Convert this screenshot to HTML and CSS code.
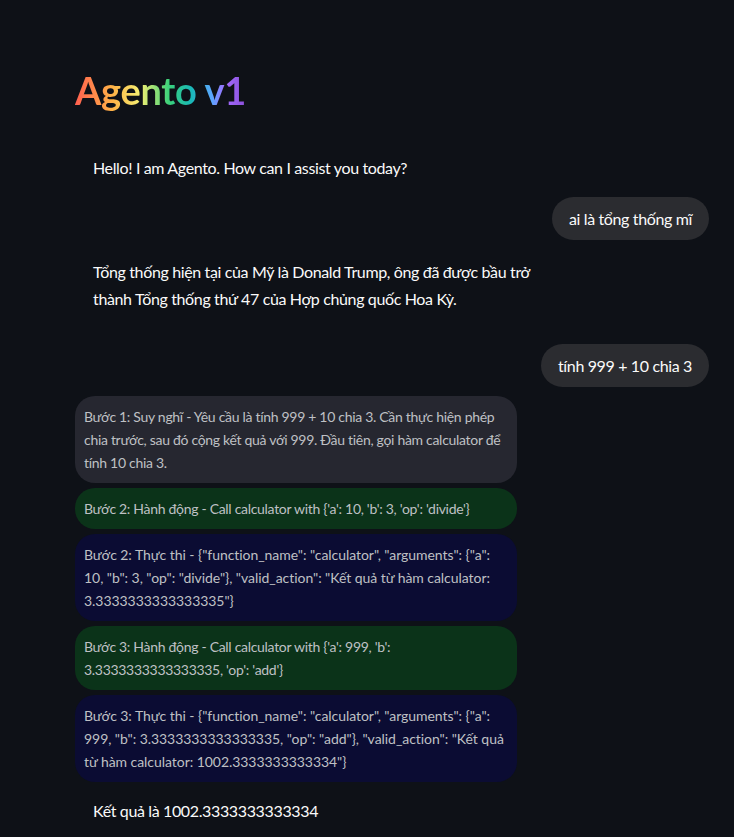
FILE: index.html
```html
<!DOCTYPE html>
<html lang="vi">
<head>
<meta charset="utf-8">
<title>Agento v1</title>
<link rel="stylesheet" href="styles.css">
</head>
<body>
<main class="app">
  <h1 class="title">Agento v1</h1>
  <div class="chat">
    <div class="msg msg-bot msg-first">Hello! I am Agento. How can I assist you today?</div>
    <div class="msg-row"><div class="msg-user">ai là tổng thống mĩ</div></div>
    <div class="msg msg-bot msg-long">Tổng thống hiện tại của Mỹ là Donald Trump, ông đã được bầu trở thành Tổng thống thứ 47 của Hợp chủng quốc Hoa Kỳ.</div>
    <div class="msg-row msg-row-2"><div class="msg-user">tính 999 + 10 chia 3</div></div>
    <div class="steps">
      <div class="step step-think">Bước 1: Suy nghĩ - Yêu cầu là tính 999 + 10 chia 3. Cần thực hiện phép chia trước, sau đó cộng kết quả với 999. Đầu tiên, gọi hàm calculator để tính 10 chia 3.</div>
      <div class="step step-act">Bước 2: Hành động - Call calculator with {'a': 10, 'b': 3, 'op': 'divide'}</div>
      <div class="step step-exec">Bước 2: Thực thi - {"function_name": "calculator", "arguments": {"a": 10, "b": 3, "op": "divide"}, "valid_action": "Kết quả từ hàm calculator: 3.3333333333333335"}</div>
      <div class="step step-act">Bước 3: Hành động - Call calculator with {'a': 999, 'b': 3.3333333333333335, 'op': 'add'}</div>
      <div class="step step-exec">Bước 3: Thực thi - {"function_name": "calculator", "arguments": {"a": 999, "b": 3.3333333333333335, "op": "add"}, "valid_action": "Kết quả từ hàm calculator: 1002.3333333333334"}</div>
    </div>
    <div class="msg msg-bot msg-final">Kết quả là 1002.3333333333334</div>
  </div>
</main>
</body>
</html>
```
FILE: styles.css
```css
html, body {
  margin: 0;
  padding: 0;
  background: #0e1117;
}
body {
  font-family: "Lato", "Noto Sans", sans-serif;
  color: #fafafa;
  height: 837px;
  overflow: hidden;
}
.app {
  width: 634px;
  padding: 62px 25px 0 75px;
}
.title {
  margin: 0;
  font-size: 38px;
  font-weight: 700;
  line-height: 56px;
  letter-spacing: -0.3px;
  display: inline-block;
  background: linear-gradient(90deg, #ff5f4f 0%, #ffb347 22%, #f5ef72 38%, #3ad17a 55%, #19b8b8 68%, #5aa7ff 80%, #a36bff 88%, #8a4fd8 100%);
  -webkit-background-clip: text;
  background-clip: text;
  color: transparent;
}
.chat {
  display: flex;
  flex-direction: column;
}
.msg {
  font-size: 16px;
  line-height: 27px;
  letter-spacing: -0.36px;
  padding: 0 18px;
}
.msg-first {
  margin-top: 36px;
}
.msg-row {
  display: flex;
  justify-content: flex-end;
  margin-top: 16px;
}
.msg-row-2 {
  margin-top: 32px;
}
.msg-user {
  background: #2b2c30;
  border-radius: 22px;
  padding: 0 17px;
  height: 43px;
  line-height: 43px;
  font-size: 16px;
  letter-spacing: -0.36px;
}
.msg-long {
  width: 440px;
  margin-top: 18px;
}
.steps {
  display: flex;
  flex-direction: column;
  gap: 5px;
  width: 442px;
  margin-top: 9px;
}
.step {
  font-size: 14px;
  line-height: 23px;
  letter-spacing: -0.3px;
  color: #bfc0c4;
  padding: 9px 9px;
  border-radius: 20px;
}
.step-think { background: #262730; }
.step-act { background: #0b3319; }
.step-exec {
  background: #0b0c33;
  letter-spacing: -0.05px;
}
.msg-final {
  margin-top: 15px;
}
```
